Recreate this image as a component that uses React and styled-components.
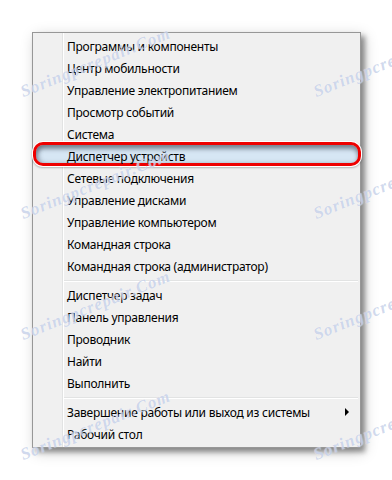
import React from "react";
import styled, { createGlobalStyle } from "styled-components";

const Global = createGlobalStyle`
  html, body { margin: 0; padding: 0; background: #ffffff; }
  body { font-family: "Noto Sans", "Open Sans", sans-serif; }
`;

const Page = styled.div`
  position: relative;
  width: 392px;
  height: 480px;
  overflow: hidden;
  background: #ffffff;
  padding: 32px 0 0 32px;
  box-sizing: border-box;
`;

const Menu = styled.div`
  width: 329px;
  box-sizing: border-box;
  border: 1px solid #979797;
  padding: 2px 0;
  background:
    linear-gradient(
      to right,
      transparent 29px,
      #e2e3e3 29px,
      #e2e3e3 30px,
      #ffffff 30px,
      #ffffff 31px,
      transparent 31px
    ),
    #f0f0f0;
  box-shadow: 4px 4px 5px rgba(0, 0, 0, 0.38), 3px 4px 14px rgba(0, 0, 0, 0.2);
`;

const Row = styled.div`
  position: relative;
  display: flex;
  align-items: center;
  height: 22px;
  padding: 0 11px 0 34px;
  font-size: 12px;
  letter-spacing: -0.25px;
  color: #000;
  white-space: nowrap;

  ${(p) =>
    p.$marked &&
    `
    &::before {
      content: "";
      position: absolute;
      left: 0;
      right: -1px;
      top: -3px;
      height: 18px;
      border: 3px solid #ee0000;
      border-radius: 10px;
      background: #d6e6f4;
      box-shadow: 0 0 0 1px #ffffff, 0 1px 2px 1px rgba(0,0,0,0.25),
        inset 0 4px 4px rgba(70, 80, 95, 0.6), inset 3px 0 4px rgba(70, 80, 95, 0.35);
    }
  `}
`;

const Label = styled.span`
  position: relative;
  flex: 1;
`;

const Arrow = styled.span`
  width: 0;
  height: 0;
  border-left: 4px solid #000;
  border-top: 4px solid transparent;
  border-bottom: 4px solid transparent;
`;

const Separator = styled.div`
  height: 7px;
  margin-left: 31px;
  margin-right: 2px;
  box-sizing: border-box;
  padding-top: 3px;

  &::after {
    content: "";
    display: block;
    height: 1px;
    background: #e2e3e3;
    border-bottom: 1px solid #ffffff;
  }
`;

const Watermark = styled.div`
  position: absolute;
  transform-origin: 0 100%;
  transform: rotate(-22deg);
  font-family: "Liberation Serif", "DejaVu Serif", serif;
  font-style: italic;
  font-weight: bold;
  font-size: 17px;
  letter-spacing: 1px;
  color: rgba(150, 170, 215, 0.45);
  text-shadow: 0 0 1px rgba(255, 255, 255, 0.8);
  pointer-events: none;
  white-space: nowrap;
`;

const groups = [
  [
    "Программы и компоненты",
    "Центр мобильности",
    "Управление электропитанием",
    "Просмотр событий",
    "Система",
    "Диспетчер устройств",
    "Сетевые подключения",
    "Управление дисками",
    "Управление компьютером",
    "Командная строка",
    "Командная строка (администратор)",
  ],
  ["Диспетчер задач", "Панель управления", "Проводник", "Найти", "Выполнить"],
  ["Завершение работы или выход из системы", "Рабочий стол"],
];

const marks = [];
[90, 212, 333, 453].forEach((y) => {
  [25, 318].forEach((x) => marks.push({ x, y }));
});

export default function App() {
  return (
    <>
      <Global />
      <Page>
        <Menu>
          {groups.map((g, gi) => (
            <React.Fragment key={gi}>
              {gi > 0 && <Separator />}
              {g.map((t) => (
                <Row key={t} $marked={t === "Диспетчер устройств"}>
                  <Label>{t}</Label>
                  {t.startsWith("Завершение") && <Arrow />}
                </Row>
              ))}
            </React.Fragment>
          ))}
        </Menu>
        {marks.map((m, i) => (
          <Watermark key={i} style={{ left: m.x, top: m.y - 8 }}>
            Soringpcrepair.Com
          </Watermark>
        ))}
      </Page>
    </>
  );
}
